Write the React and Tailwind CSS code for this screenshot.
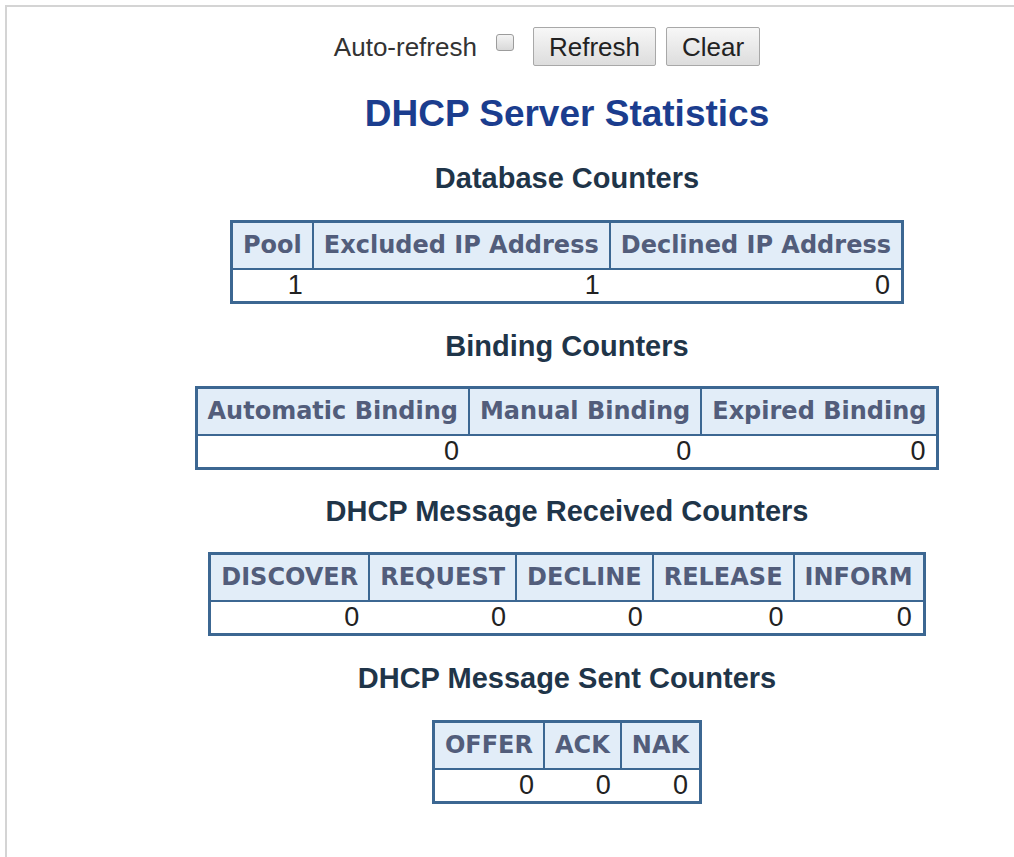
import React from "react";

const tables = [
  {
    title: "Database Counters",
    headers: ["Pool", "Excluded IP Address", "Declined IP Address"],
    values: ["1", "1", "0"],
    mt: "mt-[26px]",
    tmt: "mt-[25px]",
  },
  {
    title: "Binding Counters",
    headers: ["Automatic Binding", "Manual Binding", "Expired Binding"],
    values: ["0", "0", "0"],
    mt: "mt-[26px]",
    tmt: "mt-[23px]",
  },
  {
    title: "DHCP Message Received Counters",
    headers: ["DISCOVER", "REQUEST", "DECLINE", "RELEASE", "INFORM"],
    values: ["0", "0", "0", "0", "0"],
    mt: "mt-[25px]",
    tmt: "mt-[24px]",
  },
  {
    title: "DHCP Message Sent Counters",
    headers: ["OFFER", "ACK", "NAK"],
    values: ["0", "0", "0"],
    mt: "mt-[26px]",
    tmt: "mt-[25px]",
  },
];

function Section({ t, first }) {
  return (
    <>
      <h2
        className={`${first ? "mt-[27px]" : t.mt} text-[29px] leading-[33px] font-bold text-[#1f3549] font-['Liberation_Sans',Arial,sans-serif]`}
      >
        {t.title}
      </h2>
      <table
        className={`${t.tmt} border-separate border-spacing-0 border-[3px] border-[#3c6792]`}
      >
        <thead>
          <tr>
            {t.headers.map((h, i) => (
              <th
                key={i}
                className={`bg-[#e2edf8] px-[10px] py-[8px] text-[24px] leading-[29px] font-bold text-[#525d7b] whitespace-nowrap border-b-2 border-[#3c6792] font-['DejaVu_Sans',Verdana,sans-serif] ${
                  i < t.headers.length - 1 ? "border-r-2" : ""
                }`}
              >
                {h}
              </th>
            ))}
          </tr>
        </thead>
        <tbody>
          <tr>
            {t.values.map((v, i) => (
              <td
                key={i}
                className="bg-white pl-[10px] pr-[11px] text-right text-[27px] leading-[31px] text-[#222] font-['Liberation_Sans',Arial,sans-serif]"
              >
                {v}
              </td>
            ))}
          </tr>
        </tbody>
      </table>
    </>
  );
}

export default function App() {
  return (
    <div className="w-[1014px] h-[857px] bg-white overflow-hidden">
      <div className="ml-[5px] mt-[5px] h-[852px] border-l-2 border-t-2 border-[#d4d4d4] pl-[113px] flex flex-col items-center">
        <div className="mt-[20px] pr-[40px] flex items-center h-[39px] font-['Liberation_Sans',Arial,sans-serif] text-[26px] text-[#333]">
          <span className="leading-[30px]">Auto-refresh</span>
          <span className="ml-[19px] mb-[8px] w-[18px] h-[17px] rounded-[3px] border border-[#9c9c9c] bg-gradient-to-b from-[#f4f4f4] to-[#d9d9d9]" />
          <button className="ml-[19px] h-[39px] px-[15px] border border-[#a8a8a8] rounded-[2px] bg-gradient-to-b from-[#f7f7f7] to-[#dddddd] text-[26px] leading-[30px] text-[#222]">
            Refresh
          </button>
          <button className="ml-[10px] h-[39px] px-[15px] border border-[#a8a8a8] rounded-[2px] bg-gradient-to-b from-[#f7f7f7] to-[#dddddd] text-[26px] leading-[30px] text-[#222]">
            Clear
          </button>
        </div>
        <h1 className="mt-[27px] text-[37px] leading-[42px] font-bold text-[#1b3d8e] font-['Liberation_Sans',Arial,sans-serif]">
          DHCP Server Statistics
        </h1>
        {tables.map((t, i) => (
          <Section key={i} t={t} first={i === 0} />
        ))}
      </div>
    </div>
  );
}
